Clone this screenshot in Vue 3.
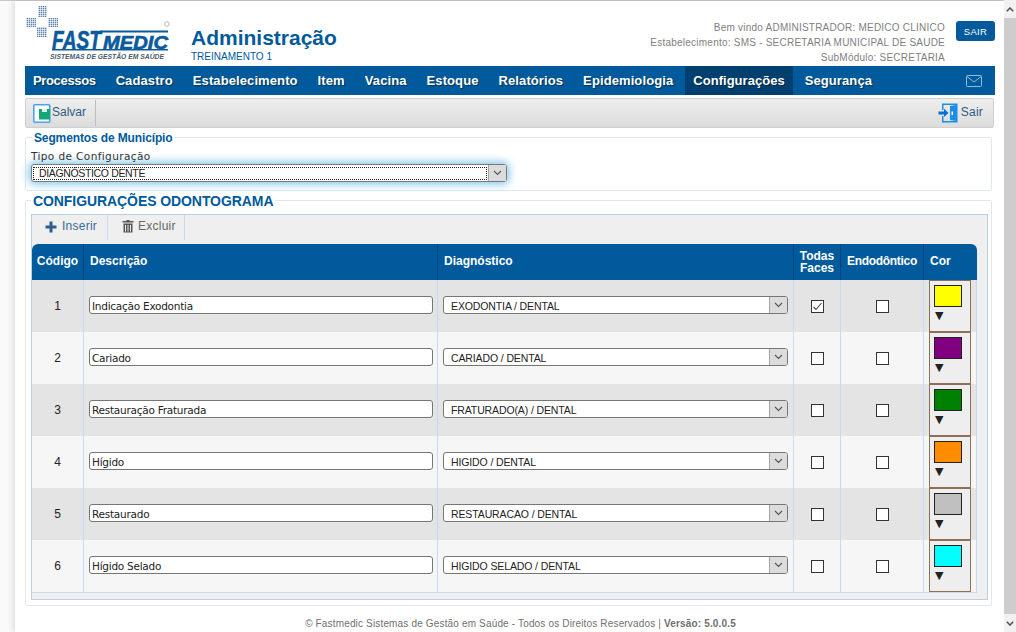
<template>
  <div class="window">
    <div class="page">
      <div class="sheet">
        <header class="top">
          <div class="brand">
            <svg class="logo" width="146" height="60" viewBox="0 0 146 60">
              <defs>
                <pattern id="dots" width="2" height="2" patternUnits="userSpaceOnUse">
                  <rect width="1.4" height="1.4" fill="#5f86ad" />
                </pattern>
              </defs>
              <rect x="13" y="2" width="9" height="11" fill="url(#dots)" />
              <rect x="1" y="14" width="10" height="9" fill="url(#dots)" />
              <rect x="23" y="14" width="10" height="9" fill="url(#dots)" />
              <rect x="12" y="23" width="10" height="10" fill="url(#dots)" />
              <circle cx="142" cy="20" r="2.3" fill="none" stroke="#9aa7b3" stroke-width="0.8" />
              <rect x="75" y="26.500" width="68" height="2" fill="#0b5a9c" />
              <rect x="27" y="45" width="116" height="1.500" fill="#0b5a9c" />
              <text transform="translate(27 44.500) scale(0.766 1)" class="logo-name logo-fast">FAST</text>
              <text transform="translate(78 44.500) scale(1.120 1)" class="logo-name logo-medic">MEDIC</text>
              <text x="25" y="55" textLength="114" lengthAdjust="spacingAndGlyphs" class="logo-sub">SISTEMAS DE GESTÃO EM SAÚDE</text>
            </svg>
            <div class="title-box">
              <h1>Administração</h1>
              <div class="subtitle">TREINAMENTO 1</div>
            </div>
          </div>
          <div class="user-box">
            <div class="user-info">
              <div>Bem vindo ADMINISTRADOR: MEDICO CLINICO</div>
              <div>Estabelecimento: SMS - SECRETARIA MUNICIPAL DE SAUDE</div>
              <div>SubMódulo: SECRETARIA</div>
            </div>
            <button class="btn-sair">SAIR</button>
          </div>
        </header>

        <nav class="menu">
          <a v-for="item in menu" :key="item" :class="{ active: item === 'Configurações' }">{{ item }}</a>
          <svg class="mail" width="16" height="12" viewBox="0 0 16 12">
            <rect x="0.500" y="0.500" width="15" height="11" rx="1" fill="none" stroke="#8fbde0" />
            <path d="M1 1.500 L8 7 L15 1.500" fill="none" stroke="#8fbde0" />
          </svg>
        </nav>

        <div class="toolbar">
          <div class="tool salvar">
            <svg width="18" height="19" viewBox="0 0 18 19">
              <rect x="0.800" y="0.800" width="16" height="17.400" rx="1" fill="#fff" stroke="#4aa3ee" stroke-width="1.600" />
              <path d="M6 5 H17 V15.500 H6 Z" fill="#14a878" />
              <rect x="9" y="5" width="5" height="3" fill="#d5f2e8" />
            </svg>
            <span>Salvar</span>
          </div>
          <div class="tool sair">
            <svg width="20" height="20" viewBox="0 0 20 20">
              <path d="M4 0.500 H19.500 V19.500 H4 V13 H5.500 V18 H18 V2 H5.500 V7 H4 Z" fill="#1b8fe8" />
              <path d="M12 3 L18 2 V18 L12 17 Z" fill="#1b8fe8" />
              <path d="M0.500 8.500 H6 V5.500 L10.500 10 L6 14 V11.500 H0.500 Z" fill="#0a6fd0" />
              <rect x="13.500" y="8.500" width="1.500" height="3.500" fill="#fff" />
            </svg>
            <span>Sair</span>
          </div>
        </div>

        <section class="group seg">
          <div class="legend seg-legend">Segmentos de Município</div>
          <label class="field-label">Tipo de Configuração</label>
          <div class="combo">
            <span class="combo-text">DIAGNÓSTICO DENTE</span>
            <span class="combo-arrow">
              <svg width="9" height="6" viewBox="0 0 9 6"><path d="M1 1 L4.500 4.500 L8 1" fill="none" stroke="#555" stroke-width="1.100" /></svg>
            </span>
          </div>
        </section>

        <section class="group odo">
          <div class="legend odo-legend">CONFIGURAÇÕES ODONTOGRAMA</div>
          <div class="grid-box">
            <div class="grid-tools">
              <div class="grid-tool inserir">
                <svg width="12" height="12" viewBox="0 0 12 12"><path d="M4.500 0.500 H7.500 V4.500 H11.500 V7.500 H7.500 V11.500 H4.500 V7.500 H0.500 V4.500 H4.500 Z" fill="#2b5f92" /></svg>
                <span>Inserir</span>
              </div>
              <div class="grid-tool excluir">
                <svg width="12" height="14" viewBox="0 0 12 14">
                  <path d="M4.500 1 H7.500 V2 H11.500 V3.500 H0.500 V2 H4.500 Z" fill="#555" />
                  <path d="M1.500 4.500 H10.500 V13.500 H1.500 Z M3 6 V12.500 H4 V6 Z M5.500 6 V12.500 H6.500 V6 Z M8 6 V12.500 H9 V6 Z" fill="#555" fill-rule="evenodd" />
                </svg>
                <span>Excluir</span>
              </div>
            </div>
            <table class="grid">
              <colgroup>
                <col style="width: 52px" />
                <col style="width: 354px" />
                <col style="width: 356px" />
                <col style="width: 47px" />
                <col style="width: 83px" />
                <col style="width: 53px" />
              </colgroup>
              <thead>
                <tr>
                  <th class="center">Código</th>
                  <th>Descrição</th>
                  <th>Diagnóstico</th>
                  <th class="center faces">Todas<br />Faces</th>
                  <th class="center endo">Endodôntico</th>
                  <th class="cor-head">Cor</th>
                </tr>
              </thead>
              <tbody>
                <tr v-for="row in rows" :key="row.code">
                  <td class="center code">{{ row.code }}</td>
                  <td class="input-cell"><div class="text-input">{{ row.desc }}</div></td>
                  <td class="input-cell">
                    <div class="select">
                      <span class="select-text">{{ row.diag }}</span>
                      <span class="select-arrow">
                        <svg width="9" height="6" viewBox="0 0 9 6"><path d="M1 1 L4.500 4.500 L8 1" fill="none" stroke="#555" stroke-width="1.100" /></svg>
                      </span>
                    </div>
                  </td>
                  <td class="center">
                    <span class="check">
                      <svg v-if="row.faces" width="11" height="11" viewBox="0 0 11 11"><path d="M1.500 6 L4 8.500 L9.500 2" fill="none" stroke="#444" stroke-width="1.100" /></svg>
                    </span>
                  </td>
                  <td class="center"><span class="check"></span></td>
                  <td class="cor-cell">
                    <div class="picker">
                      <span class="swatch" :style="{ background: row.color }"></span>
                      <span class="caret">▼</span>
                    </div>
                  </td>
                </tr>
              </tbody>
            </table>
          </div>
        </section>

        <footer class="foot">
          © Fastmedic Sistemas de Gestão em Saúde - Todos os Direitos Reservados | <b>Versão: 5.0.0.5</b>
        </footer>
      </div>
    </div>
    <div class="scrollbar">
      <div class="scroll-btn">
        <svg width="8" height="5" viewBox="0 0 8 5"><path d="M0.800 4.300 L4 1 L7.200 4.300" fill="none" stroke="#505050" stroke-width="1.500" /></svg>
      </div>
      <div class="scroll-thumb"></div>
      <div class="scroll-btn">
        <svg width="8" height="5" viewBox="0 0 8 5"><path d="M0.800 0.700 L4 4 L7.200 0.700" fill="none" stroke="#505050" stroke-width="1.500" /></svg>
      </div>
    </div>
  </div>
</template>

<script setup>
const menu = [
  'Processos',
  'Cadastro',
  'Estabelecimento',
  'Item',
  'Vacina',
  'Estoque',
  'Relatórios',
  'Epidemiologia',
  'Configurações',
  'Segurança'
]

const rows = [
  { code: 1, desc: 'Indicação Exodontia', diag: 'EXODONTIA / DENTAL', faces: true, color: '#ffff00' },
  { code: 2, desc: 'Cariado', diag: 'CARIADO / DENTAL', faces: false, color: '#800080' },
  { code: 3, desc: 'Restauração Fraturada', diag: 'FRATURADO(A) / DENTAL', faces: false, color: '#008000' },
  { code: 4, desc: 'Hígido', diag: 'HIGIDO / DENTAL', faces: false, color: '#ff8c00' },
  { code: 5, desc: 'Restaurado', diag: 'RESTAURACAO / DENTAL', faces: false, color: '#c0c0c0' },
  { code: 6, desc: 'Hígido Selado', diag: 'HIGIDO SELADO / DENTAL', faces: false, color: '#00ffff' }
]
</script>

<style>
html,
body {
  margin: 0;
  height: 100%;
  overflow: hidden;
}
</style>

<style scoped>
.window {
  display: flex;
  width: 1016px;
  height: 632px;
  overflow: hidden;
  font-family: "Liberation Sans", Arial, sans-serif;
  background: #fff;
}

.page {
  flex: 1;
  min-width: 0;
  border-top: 1px solid #c8c8c8;
  background: #fafafa;
  padding-left: 15px;
}

.sheet {
  height: 631px;
  background: #fff;
  box-shadow: -2px 0 6px rgba(0, 0, 0, 0.12);
  padding: 0 9px 0 10px;
  box-sizing: border-box;
}

.scrollbar {
  width: 12px;
  flex: none;
  display: flex;
  flex-direction: column;
  background: #f1f1f1;
}

.scroll-btn {
  height: 18px;
  display: flex;
  align-items: center;
  justify-content: center;
  background: #f1f1f1;
}

.scroll-thumb {
  flex: 1;
  background: #cdcdcd;
}

/* header */
.top {
  display: flex;
  justify-content: space-between;
  height: 65px;
}

.brand {
  display: flex;
}

.logo {
  margin-top: 3px;
  overflow: visible;
}

.logo-name {
  font-family: "Liberation Sans", sans-serif;
  font-weight: 700;
  font-style: italic;
  fill: #0b5a9c;
  stroke: #0b5a9c;
  stroke-width: 0.6px;
}

.logo-fast {
  font-size: 25px;
}

.logo-medic {
  font-size: 18px;
}

.logo-sub {
  font-family: "Liberation Sans", sans-serif;
  font-size: 6.500px;
  font-weight: 700;
  font-style: italic;
  fill: #4a5a68;
}

.title-box {
  margin-left: 20px;
  padding-top: 24px;
}

h1 {
  margin: 0;
  font-size: 21px;
  line-height: 26px;
  font-weight: 700;
  color: #005a9c;
}

.subtitle {
  font-size: 10px;
  line-height: 11px;
  color: #005a9c;
}

.user-box {
  display: flex;
  padding-top: 20px;
}

.user-info {
  text-align: right;
  font-size: 10px;
  line-height: 15px;
  letter-spacing: 0.23px;
  color: #808080;
  margin-top: -1px;
}

.btn-sair {
  width: 39px;
  height: 20px;
  margin-left: 11px;
  padding: 0;
  border: 0;
  border-radius: 3px;
  background: #005a9c;
  color: #fff;
  font: 9.500px "Liberation Sans", sans-serif;
  letter-spacing: 0.3px;
}

/* menu */
.menu {
  display: flex;
  align-items: stretch;
  gap: 4px;
  height: 29px;
  background: #005a9c;
}

.menu a {
  display: flex;
  align-items: center;
  padding: 0 8px;
  font-size: 13px;
  font-weight: 700;
  letter-spacing: 0.1px;
  color: #fff;
  text-shadow: 1px 1px 1px rgba(0, 0, 0, 0.45);
}

.menu a:first-child {
  letter-spacing: -0.35px;
}

.menu a.active {
  background: #004070;
  letter-spacing: 0.03px;
}

.mail {
  margin: auto 13px auto auto;
}

/* toolbar */
.toolbar {
  display: flex;
  justify-content: space-between;
  box-sizing: border-box;
  height: 30px;
  margin: 3px 1px 0 0;
  border: 1px solid #cfcfcf;
  border-radius: 2px;
  background: linear-gradient(#eeeeee, #dcdcdc);
  font-size: 12px;
  color: #2d5a86;
}

.tool {
  display: flex;
  align-items: center;
}

.tool span {
  margin-top: -2px;
}

.salvar {
  gap: 1px;
  padding: 0 9px 0 7px;
  border-right: 1px solid #bdbdbd;
  margin: 1px 0;
}

.sair {
  gap: 3px;
  padding-right: 10px;
  letter-spacing: 0.2px;
}

/* field groups */
.group {
  position: relative;
  box-sizing: border-box;
  margin-right: 3px;
  border: 1px solid #dfe8f1;
  border-radius: 2px;
}

.legend {
  position: absolute;
  background: #fff;
  padding: 0 2px;
  font-weight: 700;
  color: #005a9c;
}

.seg {
  height: 54px;
  margin-top: 9px;
  padding: 12px 5px 0;
}

.seg-legend {
  top: -7px;
  left: 6px;
  font-size: 12px;
  line-height: 14px;
  letter-spacing: -0.13px;
}

.field-label {
  display: block;
  font: 10.500px/12px "DejaVu Sans", sans-serif;
  color: #333;
  height: 14px;
  letter-spacing: 0.4px;
}

.combo {
  display: flex;
  align-items: center;
  box-sizing: border-box;
  width: 476px;
  height: 18px;
  border: 1px solid #7a7a7a;
  border-radius: 3px;
  background: #fff;
  box-shadow: 0 0 8px 2px #7fc4ea;
  font-size: 10.500px;
  letter-spacing: -0.35px;
  color: #222;
}

.combo-text {
  flex: 1;
  margin: 1px;
  padding-left: 6px;
  line-height: 13px;
  outline: 1px dotted #222;
  outline-offset: -1px;
}

.combo-arrow,
.select-arrow {
  display: flex;
  align-items: center;
  justify-content: center;
  flex: none;
  width: 17px;
  align-self: stretch;
  background: #dcdcdc;
  border-left: 1px solid #a5a5a5;
}

.odo {
  height: 406px;
  margin-top: 9px;
  padding: 13px 3px 0 5px;
  background: #fff;
  border-color: #e6e6e6;
}

.odo-legend {
  top: -8px;
  left: 5px;
  font-size: 14px;
  line-height: 16px;
  letter-spacing: -0.08px;
}

.grid-box {
  box-sizing: border-box;
  height: 386px;
  border: 1px solid #b9cfe2;
  background: #efefef;
}

.grid-tools {
  display: flex;
  height: 25px;
  margin-bottom: 4px;
  font-size: 12px;
}

.grid-tool {
  display: flex;
  align-items: center;
  box-sizing: border-box;
  border-right: 1px solid #c9d9f2;
}

.grid-tool svg {
  margin-top: -1px;
}

.grid-tool span {
  margin-top: -4px;
  letter-spacing: 0.25px;
}

.inserir {
  width: 76px;
  padding-left: 13px;
  gap: 5px;
  color: #3a6a98;
}

.excluir {
  width: 77px;
  padding-left: 14px;
  gap: 4px;
  color: #666;
}

.excluir svg {
  margin-top: -3px;
}

.grid {
  width: 945px;
  table-layout: fixed;
  border-collapse: separate;
  border-spacing: 0;
  font-size: 10.500px;
  color: #222;
}

.grid th {
  height: 36px;
  padding: 0 0 2px 6px;
  box-sizing: border-box;
  background: #005a9c;
  color: #fff;
  font-size: 12px;
  line-height: 12px;
  text-align: left;
  border-right: 1px solid #00467c;
}

.grid th:first-child {
  border-top-left-radius: 6px;
}

.grid th:last-child {
  border-right: 0;
  border-top-right-radius: 6px;
}

.grid th.center {
  padding: 0 0 2px;
  text-align: center;
}

.grid th.faces {
  padding: 0;
}

.grid th.endo {
  letter-spacing: -0.3px;
}

.grid td {
  height: 52px;
  padding: 0 5px;
  box-sizing: border-box;
  border-right: 1px solid #c9d9f2;
  background: #f6f6f6;
}

.grid tbody tr:nth-child(odd) td {
  background: #e4e4e4;
}

.grid tbody tr:last-child td {
  border-bottom: 1px solid #c9d9f2;
}

.grid td.center {
  padding: 0;
  text-align: center;
}

.grid td.input-cell {
  padding: 0 5px 2px;
}

.grid td.input-cell:nth-child(2) {
  padding-right: 4px;
}

.code {
  font-size: 12px;
}

.text-input {
  box-sizing: border-box;
  height: 18px;
  padding-left: 2px;
  border: 1px solid #767676;
  border-radius: 3px;
  background: #fff;
  font: 10.500px/18px "DejaVu Sans", sans-serif;
  letter-spacing: -0.25px;
  color: #222;
}

.select {
  display: flex;
  box-sizing: border-box;
  height: 18px;
  border: 1px solid #767676;
  border-radius: 3px;
  background: #fff;
  overflow: hidden;
}

.select-text {
  flex: 1;
  padding-left: 7px;
  font-size: 10.500px;
  letter-spacing: -0.12px;
  line-height: 18px;
}

.check {
  display: inline-flex;
  align-items: center;
  justify-content: center;
  box-sizing: border-box;
  width: 13px;
  height: 13px;
  border: 1px solid #333;
  background: #fff;
  vertical-align: middle;
}

.grid td.cor-cell {
  padding: 0;
}

.picker {
  box-sizing: border-box;
  width: 42px;
  height: 52px;
  margin-left: 5px;
  padding: 4px 0 0 4px;
  border: 1px solid #8c6f55;
  background: #eeeeee;
}

.swatch {
  display: block;
  box-sizing: border-box;
  width: 28px;
  height: 22px;
  border: 1px solid #222;
}

.caret {
  display: block;
  font-family: "DejaVu Sans", sans-serif;
  font-size: 11px;
  line-height: 12px;
  margin: 3px 0 0 1px;
  color: #222;
}

.foot {
  margin-top: 12px;
  padding-left: 21px;
  text-align: center;
  font-size: 10px;
  letter-spacing: 0.16px;
  color: #707070;
}
</style>
